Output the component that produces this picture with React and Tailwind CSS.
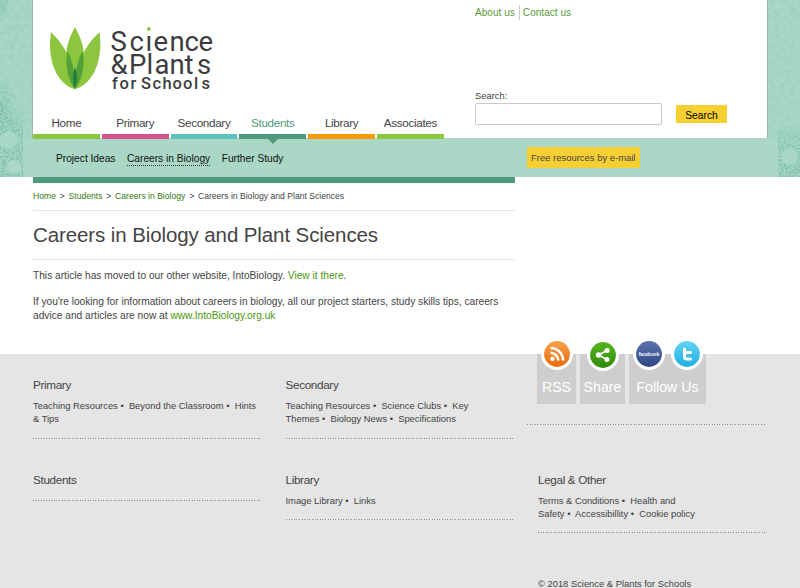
import React from 'react';

const tabs = [
    { label: 'Home', bar: 'bg-[#8cc63f]' },
    { label: 'Primary', bar: 'bg-[#d4558a]' },
    { label: 'Secondary', bar: 'bg-[#5bc3bc]' },
    { label: 'Students', bar: 'bg-[#4f9a7d]', active: true },
    { label: 'Library', bar: 'bg-[#fb9a09]' },
    { label: 'Associates', bar: 'bg-[#8cc63f]' },
];

// Speckled leaf texture down both sides of the header
function HeaderTexture() {
    return (
        <svg className="absolute inset-0" width="800" height="177" viewBox="0 0 800 177">
            <defs>
                <filter id="speckle" x="0" y="0" width="100%" height="100%" colorInterpolationFilters="sRGB">
                    <feTurbulence type="fractalNoise" baseFrequency="0.5" numOctaves="2" seed="4" />
                    <feColorMatrix values="0 0 0 0 0.4  0 0 0 0 0.71  0 0 0 0 0.61  3 0 0 0 -1.1" />
                </filter>
                <filter id="mottle" x="0" y="0" width="100%" height="100%" colorInterpolationFilters="sRGB">
                    <feTurbulence type="fractalNoise" baseFrequency="0.2" numOctaves="2" seed="9" />
                    <feColorMatrix values="0 0 0 0 0.52  0 0 0 0 0.78  0 0 0 0 0.7  1.6 0 0 0 -0.5" />
                </filter>
                <radialGradient id="patch">
                    <stop offset="0" stopColor="#fff" />
                    <stop offset="1" stopColor="#fff" stopOpacity="0" />
                </radialGradient>
                <linearGradient id="rise" x1="0" y1="1" x2="0" y2="0">
                    <stop offset="0" stopColor="#bbb" />
                    <stop offset="0.6" stopColor="#999" />
                    <stop offset="1" stopColor="#fff" stopOpacity="0" />
                </linearGradient>
                <mask id="edges">
                    <ellipse cx="0" cy="6" rx="9" ry="15" fill="url(#patch)" />
                    <ellipse cx="0" cy="115" rx="18" ry="40" fill="url(#patch)" />
                    <rect x="0" y="110" width="23" height="68" fill="url(#rise)" />
                    <rect x="778" y="125" width="22" height="53" fill="url(#rise)" />
                </mask>
            </defs>
            <rect x="0" y="0" width="33" height="139" filter="url(#mottle)" opacity="0.45" />
            <rect x="767" y="0" width="33" height="139" filter="url(#mottle)" opacity="0.45" />
            <g mask="url(#edges)">
                <rect width="800" height="178" filter="url(#speckle)" />
            </g>
            <ellipse cx="8" cy="140" rx="10" ry="8" fill="#a9d8c6" transform="rotate(-12 8 140)" />
            <ellipse cx="14" cy="167" rx="7.500" ry="7" fill="#a9d8c6" />
            <circle cx="789.500" cy="157" r="8" fill="#a9d8c6" />
        </svg>
    );
}

function Logo() {
    return (
        <svg width="170" height="72" viewBox="48 24 170 72" aria-label="Science & Plants for Schools">
            <path d="M51 32C62 43 75 60 75 89C61 86 46 66 51 32Z" fill="#8cc63f" />
            <path d="M99.500 32C88 43 75 60 75 89C89 86 104 66 99.500 32Z" fill="#8cc63f" />
            <path d="M75 27C80 36 84 46 84 58C84 71 80 82 75 89C70 82 66 71 66 58C66 46 70 36 75 27Z" fill="#8cc63f" />
            <path d="M67.500 51C72 60 75 70 75 89C69 82 64 66 67.500 51Z" fill="#569f36" />
            <path d="M82.500 51C78 60 75 70 75 89C81 82 86 66 82.500 51Z" fill="#569f36" />
            <path d="M75 67C77.500 74 77.500 81 75 89C72.500 81 72.500 74 75 67Z" fill="#1f7f3c" />
            <g fill="#3d3d40" className="font-[Roboto,sans-serif]">
                <text x="110.500 129.500 145.500 153.500 169.500 184.500 198.500" y="51" fontSize="27.500">Science</text>
                <text x="110.500 129 146.500 154.500 169.500 184.500 197" y="73.500" fontSize="27.500">&amp;Plants</text>
                <text x="112 119.500 130.500 137 141 152.500 162.500 172.500 183 194 201.500" y="89.300" fontSize="16.500" fontWeight="500">for Schools</text>
            </g>
            {/* the dot of the "i" sits higher, in green */}
            <rect x="146" y="28" width="6" height="7" fill="#fff" />
            <circle cx="148.800" cy="29" r="1.900" fill="#8cc63f" />
        </svg>
    );
}

function Badge({ from, to, id, className, children }) {
    return (
        <svg width="32" height="32" viewBox="0 0 32 32" className={className}>
            <defs>
                <linearGradient id={id} x1="0" y1="0" x2="0" y2="1">
                    <stop offset="0" stopColor={from} />
                    <stop offset="1" stopColor={to} />
                </linearGradient>
            </defs>
            <circle cx="16" cy="16" r="16" fill="#fff" />
            <circle cx="16" cy="16" r="12.900" fill={`url(#${id})`} />
            {children}
        </svg>
    );
}

function SocialBox({ label, width, children }) {
    return (
        <div className={`${width} relative h-[50px] bg-[#cecece]`}>
            <div className="absolute inset-x-0 -top-[16px] flex justify-center gap-[6px]">{children}</div>
            <p className="pt-[23px] text-center text-[14.200px] leading-[20px] text-white whitespace-nowrap">{label}</p>
        </div>
    );
}

function Dots({ className }) {
    return <div className={`h-px bg-[repeating-linear-gradient(90deg,#8c8c8c_0_1px,transparent_1px_2.600px)] ${className}`} />;
}

function LinkGroup({ title, lines = [], className }) {
    return (
        <section className={className}>
            <h3 className="text-[11.700px] leading-[14px] tracking-[-0.330px] text-[#444]">{title}</h3>
            {lines.length > 0 && (
                <div className="mt-[8px] text-[9.370px] leading-[13.300px] text-[#444]">
                    {lines.map((line) => (
                        <p key={line} className="whitespace-pre">{line}</p>
                    ))}
                </div>
            )}
            <Dots className={lines.length > 0 ? 'mt-[11px] w-[228px]' : 'mt-[13px] w-[228px]'} />
        </section>
    );
}

function Header() {
    return (
        <header className="relative h-[177px] bg-[#aad7c6]">
            <HeaderTexture />
            <div className="relative mx-auto h-[138px] w-[736px] border-x border-[#9fb5ac] bg-white flex">
                <div className="w-[442px] shrink-0 flex flex-col justify-between">
                    <div className="pt-[24px] pl-[15px]"><Logo /></div>
                    <nav className="flex gap-[2px] -mb-px">
                        {tabs.map((tab) => (
                            <a key={tab.label} className={`relative w-[66.800px] shrink-0 text-center text-[11.700px] leading-[20px] tracking-[-0.330px] ${tab.active ? 'text-[#4f9a7d]' : 'text-[#444]'}`}>
                                <span className="block pb-px">{tab.label}</span>
                                <span className={`block h-[5px] ${tab.bar}`} />
                                {tab.active && (
                                    <span className="absolute left-1/2 -bottom-[5px] -ml-[5px] border-x-[5px] border-t-[5px] border-x-transparent border-t-[#4f9a7d]" />
                                )}
                            </a>
                        ))}
                    </nav>
                </div>
                <div className="flex flex-col">
                    <div className="flex pt-[5px] text-[10.100px] leading-[15px] text-[#5a9b3a]">
                        <a className="border-r border-[#ccc] pr-[4px]">About us</a>
                        <a className="pl-[3px]">Contact us</a>
                    </div>
                    <form className="mt-[70px]">
                        <label className="block text-[9.370px] leading-[13px] text-[#444]">Search:</label>
                        <div className="flex items-center gap-[14px]">
                            <input type="text" className="h-[22px] w-[187px] rounded-[2px] border border-[#c8c8c8] bg-white" />
                            <button type="button" className="h-[18px] w-[51px] bg-[#f6cf32] pt-[3px] text-[10.300px] leading-[15px] text-black">Search</button>
                        </div>
                    </form>
                </div>
            </div>
            <div className="relative flex h-[39px] pl-[56px] text-[10.200px] text-[#111]">
                <nav className="flex w-[471px] gap-[11.500px] pt-[13px] leading-[15px]">
                    <a>Project Ideas</a>
                    <a className="h-[15px] border-b border-dotted border-[#333]">Careers in Biology</a>
                    <a>Further Study</a>
                </nav>
                <a className="mt-[9px] h-[21px] w-[112.500px] bg-[#f6cf32] text-center text-[9.450px] leading-[22px] text-[#444]">Free resources by e-mail</a>
            </div>
        </header>
    );
}

function Article() {
    return (
        <main className="ml-[33px] h-[177px] w-[482px] text-[#444]">
            <div className="h-[6px] bg-[#4f9a7d]" />
            <div className="flex h-[28px] gap-[3.800px] border-b border-[#e6e6e6] pt-[7px] text-[8.600px] leading-[13px]">
                <a className="text-[#357a12]">Home</a>
                <span>&gt;</span>
                <a className="text-[#357a12]">Students</a>
                <span>&gt;</span>
                <a className="text-[#357a12]">Careers in Biology</a>
                <span>&gt;</span>
                <span>Careers in Biology and Plant Sciences</span>
            </div>
            <h1 className="h-[49px] border-b border-[#e6e6e6] text-[20.500px] leading-[48px] tracking-[-0.100px]">Careers in Biology and Plant Sciences</h1>
            <div className="pt-[8px] text-[10.180px] leading-[14px]">
                <p className="pt-px">This article has moved to our other website, IntoBiology. <a className="text-[#4a960c]">View it there</a>.</p>
                <p className="mt-[12px] whitespace-nowrap">
                    If you're looking for information about careers in biology, all our project starters, study skills tips, careers
                    <br />
                    advice and articles are now at <a className="text-[#4a960c]">www.IntoBiology.org.uk</a>
                </p>
            </div>
        </main>
    );
}

function Footer() {
    return (
        <footer className="grid h-[234px] grid-cols-[252.500px_252.500px_1fr] bg-[#e5e5e5] pl-[33px]">
            <div>
                <LinkGroup className="h-[94.500px] mt-[24px]" title="Primary" lines={['Teaching Resources •  Beyond the Classroom •  Hints', '& Tips']} />
                <LinkGroup title="Students" />
            </div>
            <div>
                <LinkGroup className="h-[94.500px] mt-[24px]" title="Secondary" lines={['Teaching Resources •  Science Clubs •  Key', 'Themes •  Biology News •  Specifications']} />
                <LinkGroup title="Library" lines={['Image Library •  Links']} />
            </div>
            <div>
                <div className="flex h-[118.500px] flex-col">
                    <div className="flex gap-[4px] -ml-[1px]">
                        <SocialBox label="RSS" width="w-[39px]">
                            <Badge id="rss" from="#f9a24a" to="#e8690b">
                                <circle cx="11.500" cy="20.800" r="2.200" fill="#fff" />
                                <path d="M9.500 14.800a7.800 7.800 0 0 1 7.800 7.800M9.500 10a12.600 12.600 0 0 1 12.600 12.600" fill="none" stroke="#fff" strokeWidth="2.600" />
                            </Badge>
                        </SocialBox>
                        <SocialBox label="Share" width="w-[45px]">
                            <Badge id="share" from="#57b51f" to="#2f8a0a" className="relative top-px">
                                <path d="M20 11.500L11.500 16L20 20.500" fill="none" stroke="#fff" strokeWidth="1.800" />
                                <circle cx="20" cy="11.500" r="2.500" fill="#fff" />
                                <circle cx="11.500" cy="16" r="2.700" fill="#fff" />
                                <circle cx="20" cy="20.500" r="2.500" fill="#fff" />
                            </Badge>
                        </SocialBox>
                        <SocialBox label="Follow Us" width="w-[77px]">
                            <Badge id="facebook" from="#5b72ab" to="#2f4784">
                                <text x="16" y="17.500" textAnchor="middle" textLength="20.500" lengthAdjust="spacingAndGlyphs" fontSize="5" fontWeight="700" fill="#fff">facebook</text>
                            </Badge>
                            <Badge id="twitter" from="#63d3f5" to="#1fb0e2">
                                <path d="M13.500 11v7.500q0 2.500 2.500 2.500h3.500M13.500 14.500h6" fill="none" stroke="#fff" strokeWidth="3" strokeLinecap="round" />
                            </Badge>
                        </SocialBox>
                    </div>
                    <Dots className="mt-[20px] -ml-[11px] w-[239px]" />
                </div>
                <LinkGroup title="Legal & Other" lines={['Terms & Conditions •  Health and', 'Safety •  Accessibillity •  Cookie policy']} />
                <p className="mt-[45px] text-[9.370px] leading-[13px] text-[#444]">© 2018 Science &amp; Plants for Schools</p>
            </div>
        </footer>
    );
}

function App() {
    return (
        <div className="h-[588px] w-[800px] overflow-hidden bg-white font-['Liberation_Sans',Arial,sans-serif]">
            <Header />
            <Article />
            <Footer />
        </div>
    );
}

export default App;
